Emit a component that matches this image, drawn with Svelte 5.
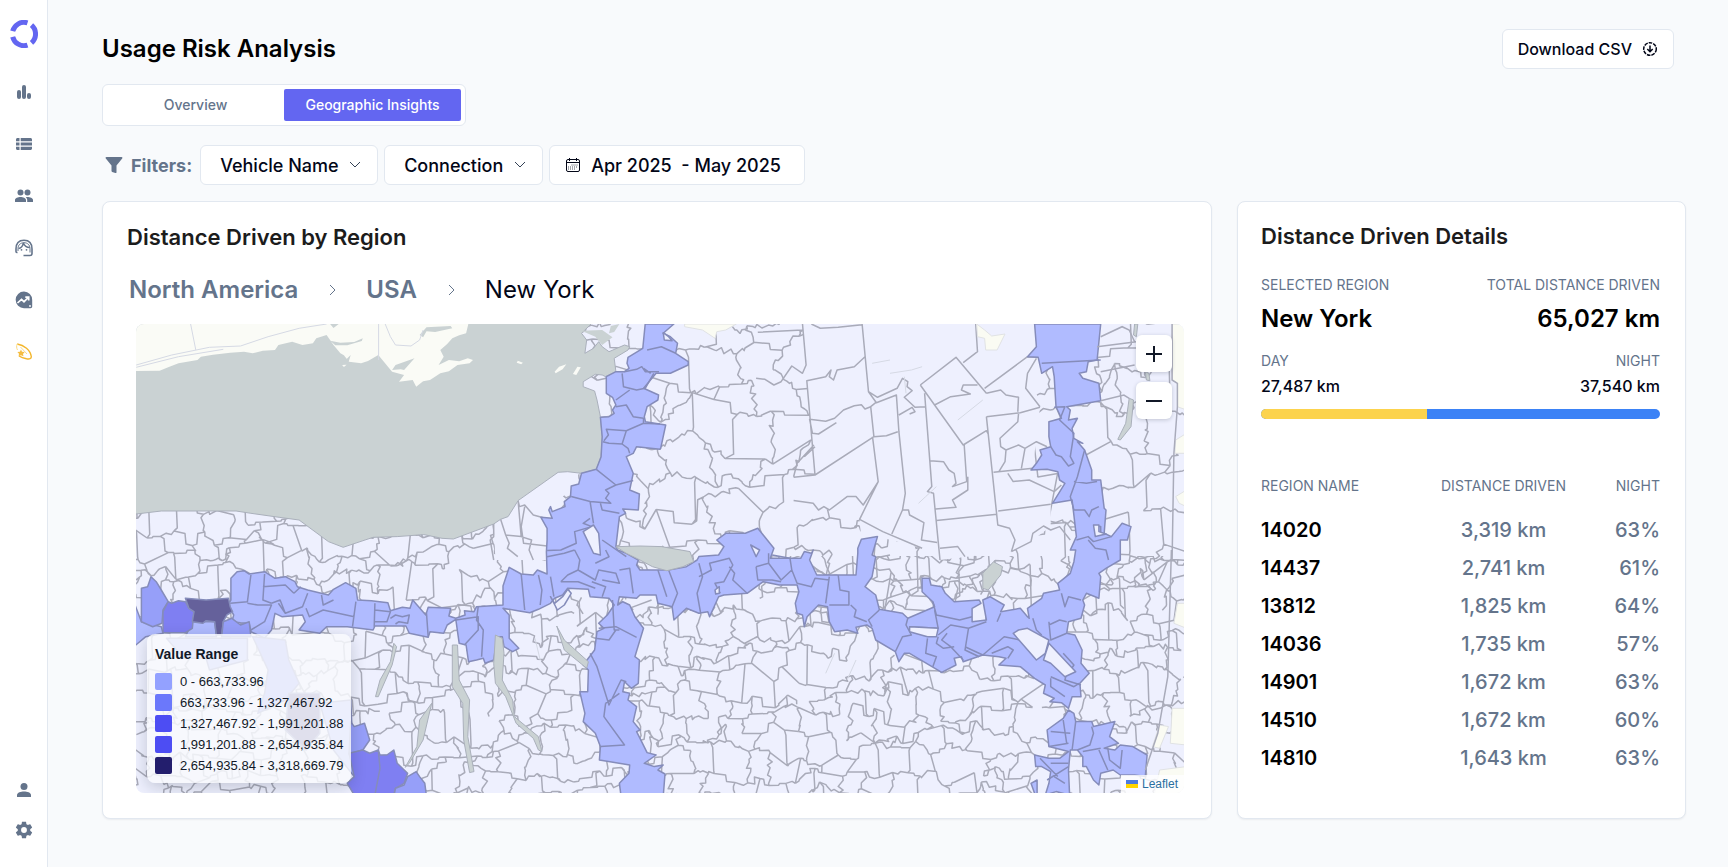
<script lang="ts">
    type Region = { fill: string; d: string }
    type RegionRow = { name: string; distance: string; night: string }

    const rows: RegionRow[] = [
        { name: '14020', distance: '3,319 km', night: '63%' },
        { name: '14437', distance: '2,741 km', night: '61%' },
        { name: '13812', distance: '1,825 km', night: '64%' },
        { name: '14036', distance: '1,735 km', night: '57%' },
        { name: '14901', distance: '1,672 km', night: '63%' },
        { name: '14510', distance: '1,672 km', night: '60%' },
        { name: '14810', distance: '1,643 km', night: '63%' }
    ]

    const legend = [
        { color: '#93a1ff', label: '0 - 663,733.96' },
        { color: '#6b78fb', label: '663,733.96 - 1,327,467.92' },
        { color: '#4d4df3', label: '1,327,467.92 - 1,991,201.88' },
        { color: '#4d4df3', label: '1,991,201.88 - 2,654,935.84' },
        { color: '#231e6d', label: '2,654,935.84 - 3,318,669.79' }
    ]

    let activeTab = $state('geo')
    let dayShare = $state(41.6)

    // The map is digitised on four sheets; a letter in a shape string switches sheet.
    const sheets: Record<string, number[]> = {
        A: [-16, -14, 0.3444, 0.3333],
        B: [504, -14, 0.3571, 0.3333],
        C: [-16, 226, 0.3444, 0.3333],
        D: [504, 226, 0.3571, 0.3333]
    }

    function shape(source: string): string {
        let sheet = sheets.A
        let cmd = 'M'
        let out = ''
        const tokens = source.trim().split(/\s+/)
        for (let i = 0; i < tokens.length; i++) {
            const t = tokens[i]
            if (sheets[t]) {
                sheet = sheets[t]
            } else if (t === 'M') {
                cmd = 'M'
            } else if (t === 'Z') {
                out += 'Z'
            } else {
                const x = sheet[0] + Number(t) * sheet[2]
                const y = sheet[1] + Number(tokens[++i]) * sheet[3]
                out += `${cmd}${x.toFixed(1)} ${y.toFixed(1)}`
                cmd = 'L'
            }
        }
        return out
    }

    function randomizer(seed: number) {
        let s = seed
        return () => {
            s = (s * 16807) % 2147483647
            return s / 2147483647
        }
    }

    // Jagged postal-code boundaries: a loose brick pattern whose edges mix
    // straight survey lines with stepped and crooked ones.
    function mesh(x0: number, y0: number, x1: number, y1: number, w: number, h: number, seed: number) {
        const rnd = randomizer(seed)
        const cols = Math.ceil((x1 - x0) / w) * 2 + 2
        const lines = Math.ceil((y1 - y0) / h) + 1
        const pts: number[][][] = []
        for (let r = 0; r <= lines; r++) {
            pts.push([])
            for (let c = 0; c <= cols; c++) {
                const x = x0 + (c - 1) * (w / 2) + (rnd() - 0.5) * w * 0.46
                const wave = Math.sin(x / 31 + r * 1.7) * h * 0.3
                pts[r].push([x, y0 + r * h + wave + (rnd() - 0.5) * h * 0.85])
            }
        }
        const edge = (p: number[], q: number[]) => {
            let d = `M${p[0].toFixed(1)} ${p[1].toFixed(1)}`
            const dx = q[0] - p[0]
            const dy = q[1] - p[1]
            const kind = rnd()
            if (kind < 0.3) {
                const k = 0.3 + rnd() * 0.4
                d += `L${(p[0] + dx * k).toFixed(1)} ${(p[1] + dy * k * 0.3).toFixed(1)}`
                d += `L${(p[0] + dx * k + 1).toFixed(1)} ${(p[1] + dy * 0.9).toFixed(1)}`
            } else if (kind < 0.82) {
                const n = Math.max(2, Math.round(Math.hypot(dx, dy) / 4))
                for (let i = 1; i < n; i++) {
                    const x = p[0] + (dx * i) / n + (rnd() - 0.5) * 6
                    const y = p[1] + (dy * i) / n + (rnd() - 0.5) * 6
                    d += `L${x.toFixed(1)} ${y.toFixed(1)}`
                }
            }
            return d + `L${q[0].toFixed(1)} ${q[1].toFixed(1)}`
        }
        let out = ''
        for (let r = 0; r < lines; r++) {
            for (let c = 0; c < cols; c++) {
                if (rnd() > 0.05) out += edge(pts[r][c], pts[r][c + 1])
                if ((c + r) % 2 === 0 && rnd() > 0.05) out += edge(pts[r][c], pts[r + 1][c])
            }
        }
        return out
    }

    const fineMesh = mesh(0, 150, 1060, 480, 27, 20, 77)
    const coarseMesh = mesh(460, -10, 1060, 236, 46, 33, 4242)

    const lake = shape(`A 40 40 1370 40 1340 70 1355 90 1350 130 1375 115 1390 95 1400 110 1420 125 1465 105 1480 110
        1475 120 1435 145 1440 185 1410 200 1400 195 1380 193 1345 215 1345 230 1378 243 1385 270 1395 320 1400 380
        1397 440 1383 478 1340 490 1300 485 1272 487 1156 572 1127 620 1105 628 1085 642 968 687 935 685 882 674
        805 680 735 682 648 712 605 695 520 630 462 622 380 610 337 603 120 603 40 613 Z`)

    const canada = shape(`A 40 40 1012 40 1005 70 985 76 965 85 950 102 930 120 940 140 925 165 955 150 985 154 1010 145
        1025 150 1015 160 980 165 955 184 930 190 900 210 880 214 860 230 850 210 810 215 825 195 790 185 750 135
        720 153 700 160 665 155 650 136 640 130 620 105 600 75 570 85 560 100 530 105 500 95 460 105 450 120
        415 122 385 130 360 125 320 128 270 134 235 140 225 150 170 160 140 172 115 182 40 183 Z
        M 1155 152 1170 158 1165 163 1152 158 Z M 1262 185 1275 170 1296 163 1285 178 1265 190 Z
        M 1315 192 1328 170 1338 172 1325 195 Z M 645 165 658 164 650 171 Z`)

    const inlets = shape(`A 610 42 635 42 620 54 Z M 610 92 640 98 680 96 705 85 702 93 660 106 625 106 Z
        M 870 75 890 52 960 48 965 55 915 66 890 64 880 82 Z M 790 180 800 165 855 145 825 180 815 178 Z
        M 655 150 670 135 664 155 Z M 1340 62 1400 60 1430 82 1400 105 1380 80 Z M 1425 48 1450 42 1435 66 1420 70 Z`)

    const smallLakes = shape(`C 1440 -10 B 0 708 60 710 140 725 D 150 35 120 50 75 62 35 50 C 1510 30 1470 10 Z
        M 795 280 803 290 790 345 750 440 742 440 755 390 785 335 Z
        M 965 285 980 285 985 390 1015 450 1010 560 1028 665 1015 668 998 570 995 460 965 410 Z
        M 1090 255 1110 265 1115 310 1110 390 1140 450 1145 500 1215 560 1225 605 1215 600 1200 565 1150 520
        1120 440 1090 400 1085 340 Z
        M 905 460 880 570 840 640 828 652 862 590 870 510 Z M 1268 228 1290 270 1360 335 1355 355 1290 300 Z
        M D 960 70 990 35 1015 50 1010 75 975 120 960 115 Z
        M B 1370 265 1382 270 1375 350 1345 390 1338 388 1360 340 Z M 1385 42 1394 42 1390 80 1382 75 Z
        M 1415 185 1425 190 1428 212 1418 210 Z`)

    const cream = shape(`B 1490 42 1530 42 1530 300 1505 290 1505 220 1490 210 Z
        M 125 42 270 42 240 60 215 65 210 85 175 60 125 50 Z
        M 943 42 965 60 985 78 1022 72 1000 120 968 120 965 85 945 80 Z
        M 1500 390 1530 370 1530 430 1498 430 Z M 1500 560 1530 540 1530 590 1510 580 Z
        M D 1490 475 1530 475 1530 585 1485 580 Z M 1455 525 1480 530 1455 595 1435 590 Z
        M 1505 160 1530 160 1530 235 1495 220 Z M 1455 660 1530 650 1530 735 1440 735 Z`)

    const uplands = shape(`B 455 42 465 165 467 212 490 495 430 502 430 570 560 610 620 560 615 628 620 690 665 680
        790 715 840 750 1040 725 1100 690 1150 650 1150 583 1100 475 1120 292 1110 250 1085 140 1110 110 1105 42 Z`)

    const uplandLines = shape(`B 455 42 465 165 455 190 425 168 395 215 375 225 350 208 325 205
        M 455 60 330 67 M 480 42 505 55 555 52 622 44
        M 622 42 640 245 662 278 718 255 725 365 743 550 735 600 705 672
        M 630 140 600 170 552 180 542 210 530 200 535 180 520 200 467 212 490 495 430 502
        M 490 495 655 380 690 377 722 365 M 655 380 646 290 660 278
        M 646 290 630 297 620 284 600 287 570 300 545 325 520 334 475 328 483 370 500 372 550 338
        M 651 380 667 515 615 628 680 665 790 715 M 667 515 625 585 605 560 580 560 530 600 515 590 500 600 485 580 430 572
        M 640 245 665 262 720 235 735 205 750 215 748 230 762 242 740 262 770 292 800 290
        M 785 225 885 142 970 250 M 785 225 905 405 970 362 975 372 M 797 250 817 530 805 545 822 550 840 750
        M 905 158 945 125 940 42 M 965 235 1085 140 1115 142
        M 970 250 1010 240 1025 255 1060 262 1058 305
        M 825 285 870 260 925 252 900 240 905 225 945 225
        M 908 405 915 515 875 530 885 520 880 490 865 480 850 455 813 452
        M 918 500 918 540 875 570 885 592 828 597 M 970 320 1065 308 1120 292 M 970 320 1002 645 1035 655 1050 690 1040 725
        M 830 632 1000 613 M 1003 603 1150 583 M 990 487 1050 480 1100 475 M 1030 490 1045 515 1090 510 1160 545 1180 525
        M 1060 312 1058 335 1008 385 1010 410 1025 420 1022 455 1005 485 M 1025 420 1060 405 1078 415 1068 475
        M 1078 415 1110 395 1140 410 M 725 315 762 292 770 305 755 312
        M 735 600 752 600 755 615 795 638 788 690 832 698 M 840 715 890 710 910 740
        M 1040 725 1095 695 1100 670 1130 648 1150 660 1175 650 1205 690
        M 660 680 655 745 700 735 M 1085 190 1080 235 1120 290 M 1085 190 1110 145
        M 487 405 440 460 430 500 M 460 440 490 410`)

    const shoreLand = shape('A 1156 560 1100 620 1085 640 1090 750 1260 750 1260 600 1340 480 1270 480 Z')

    const shoreLines = shape(`A 1156 572 1160 590 1175 585 1200 615 1235 625 M 1156 572 1165 680 1120 675 1105 628
        M 1085 642 1085 680 1075 690 1085 750 M 1165 650 1172 700 1240 708 M 1120 675 1130 700 1125 715 1155 740
        M 1165 680 1195 690 1188 720 1200 750 M 1175 590 1165 650`)

    const corridor = shape(`A 1525 42 1518 115 1475 142 1472 160 1478 175 1465 185 1440 185 1412 200 1412 250 1430 262 1440 285
        1430 300 1435 310 1420 320 1395 322 1400 380 1397 440 1383 478 1340 490 1332 522 1310 528 1308 560 1290 575
        1292 590 1255 605 1250 590 1245 600 1255 625 1222 622 1240 655 1240 690
        C 1238 5 1240 72 1212 60 1200 75 1165 72 1130 52 1112 108 1112 165 1035 170 1028 185 1000 182 1002 195
        975 205 955 198 960 175 895 172 888 195 850 150 842 175 820 172 785 182 778 158 730 152 690 150 685 115
        655 98 620 118 605 135 545 120 515 110 508 95 480 80 450 85 420 65 375 72 360 62 340 65 322 85 322 150 313 165
        330 195 325 215 350 218 375 220 380 245 420 265 440 240 450 190 470 200 530 195 538 215 520 240 580 250
        600 230 660 230 735 240 740 228 830 228 840 250 895 262 900 245 940 250 950 225 975 208 985 280 1005 285
        1012 335 1035 330 1055 325 1060 340 1085 330 1095 260 1110 260 1115 290 1140 305 1158 295 1130 265
        1130 195 1112 175 1155 182 1190 188 1215 178 1250 160 1262 145 1285 135 1300 115 1360 118 1365 140 1420 145
        1435 165 1415 195 1390 220 1405 235 1385 245 1378 300 1345 345 1360 360 1358 425 1335 425 1350 490
        1345 515 1380 550 1395 590 1392 630 1480 645 1478 670 1450 700 1455 740
        D 65 740 70 672 50 660 65 645 40 650 12 640 45 615 20 608 0 565
        C 1500 545 1510 540 1490 515 1500 470 1475 450 1480 430 1460 425 1465 395 1485 415 1505 400 1508 330
        1495 320 1520 235 1495 200 1480 165 1460 155 1445 165 1450 140 1500 145
        D 0 135 45 135 50 160 90 170 95 210 130 175 165 190 190 185 195 200 220 140 235 135 300 130 345 95 390 105
        440 105 445 125 435 160 440 190 455 195 460 230 468 200 500 165 525 170 530 215 545 245 580 240 610 250 605 232 635 225
        650 235 660 270 715 305 725 335 740 310 755 310 845 367 885 345 880 325 900 320 905 335 960 315 1005 320
        1025 325 1005 345 1065 350 1105 385 1135 405 1130 430 1160 445 1148 455 1180 458 1200 475 1210 440 1235 440
        1232 400 1258 370 1235 340 1238 300 1218 255 1195 250 1200 215 1235 205 1245 165 1240 150 1250 130 1285 145
        1290 80 1285 70 1305 55 1345 30
        B 1345 690 1365 690 1375 650 1350 640 1320 680 1300 670 1305 600 1300 595 1290 510 1265 510 1265 480
        1245 420 1225 395 1240 400 1215 385 1210 355 1225 325 1200 330 1205 300 1195 290 1290 272 1285 220
        1240 205 1230 190 1250 185 1255 155 1280 150 1290 42 1105 42 1110 110 1085 140 1115 142 1125 190 1155 170
        1160 200 1165 290 1180 325 1145 335 1145 380 1150 410 1120 420 1125 435 1110 460 1095 480 1140 478
        1170 485 1175 510 1190 520 1155 580 1210 570 1222 680 1205 720
        D 1220 0 1215 35 1205 70 1170 100 1175 120 1130 130 1125 145 1085 175 1090 205 1085 200 1065 175 1010 185
        1020 165 980 140 960 150 970 210 930 215 930 175 955 160 950 150 880 155 855 130 845 110 815 105 810 85 790 85
        790 125 820 155 825 170 750 205 735 190 670 178 660 135 630 110 650 80 660 20
        B 650 735 665 680 620 688 610 715 D 610 10 605 75 530 75 495 75 475 30 485 0
        B 480 730 460 725 450 745 365 745 375 715 330 655 295 670 240 670 215 690 235 710 220 735 165 740
        D 160 30 130 50 80 60 50 60 0 60 C 1500 45 1505 30 1470 10 1445 0
        A 1440 710 1450 620 1468 610 1460 597 1505 600 1508 552 1480 540 1490 490 1470 440 1490 430 1500 410 1568 418
        B 58 415 72 345 15 335 12 320 20 290 50 270 52 255 10 235 45 190 85 190 135 165 135 155 100 130 105 100
        85 80 65 70 95 42 Z`)

    const corridorLines = shape(`A 1465 185 1500 178 1515 170 1525 185 1565 185 M 1458 190 1462 230 1500 240 1525 235 1550 190
        M 1440 270 1480 240 M 1440 290 1470 285 1490 320 1520 325 1520 340 1470 362 1412 358 1418 375 1405 392
        M 1520 340 1568 342 M 1470 362 1458 402 1420 400 1402 395 M 1458 402 1475 415 1480 430
        M 1383 478 1440 525 1490 512 M 1440 525 1410 540 1420 550 1410 565 1425 580 1365 575 1310 560
        M 1365 575 1375 640 M 1395 580 1400 600 1450 610 M 1365 625 1345 640 1370 650 1320 665 1325 700 1280 720 1240 722
        M 1400 690 1470 740
        M C 1320 0 1335 30 1330 60 1380 90 1390 60 1440 70 1450 100 1400 90 M 1410 0 1420 20 1380 40 M 1165 72 1175 180
        M 1215 75 1225 120 1220 165 M 1250 80 1260 140 M 1280 95 1330 95 1380 115 M 1450 60 1480 55 1490 130 M 1400 140 1410 110 1370 95
        M 1430 150 1435 240 1450 240 M 1390 235 1440 230 1500 262 M 1380 265 1420 270 1440 240 M 1365 310 1385 350 1420 465 1455 390 1470 395
        M 1410 460 1405 500 1465 585 1395 590 M 1410 460 1450 430 M 380 75 370 155 320 160 M 420 72 415 150 440 160 M 415 110 480 105 505 130
        M 545 130 530 170 480 190 460 160 M 540 175 550 200 590 180 680 200 M 685 155 675 230 M 740 160 738 230 M 740 180 785 185 775 215 740 215
        M 785 205 800 195 820 200 840 195 835 220 810 215 800 222 M 890 190 895 260 M 975 210 1040 200 1040 240 1000 285
        M 1040 170 1035 210 1055 240 1050 320 M 370 160 400 165 440 165 420 215 380 240 M 585 135 590 165 620 150
        M 440 160 465 150 480 190 M 505 130 525 110 M 1330 60 1300 75 1280 95 M 1240 20 1290 10 1320 0
        M D 50 60 75 140 M 80 60 105 130 90 170 M 165 40 175 80 160 130 170 190 M 165 80 200 60 195 40 250 25 260 45 235 95 210 100 225 130
        M 250 50 265 70 260 90 300 130 M 325 50 360 40 360 10 M 325 50 330 90 370 90 395 95 M 360 40 395 90 425 60 420 25 370 15
        M 425 60 440 100 480 110 490 85 530 90 M 530 80 520 160 M 555 75 560 120 585 125 585 165 530 165 M 590 165 605 180 600 200 635 215
        M 670 180 640 210 650 230 M 750 205 745 225 760 255 735 260 715 305 M 755 230 835 235 825 180 M 820 155 830 195 895 210 930 200
        M 835 260 830 280 850 295 880 290 M 805 265 800 310 830 320 820 350 M 835 255 870 225 920 235 910 300 950 320
        M 860 250 845 270 870 290 905 330 M 920 235 970 215 M 910 290 960 315 1020 260 1065 270 M 1000 215 1010 190
        M 985 310 1030 290 1045 300 1030 325 M 1150 385 1150 410 1190 440 M 1150 380 1215 410 1230 400 M 1195 215 1175 210 1145 225
        M 1145 215 1150 270 1195 250 M 1100 205 1110 240 1125 255 M 1180 130 1190 170 1200 140 1235 150
        M 1185 310 1215 345 1200 370 M 1195 370 1190 390 1235 405
        M B 1125 160 1290 150 M 1160 292 1190 290 1175 330 1215 370 1205 440 1215 460 1200 468 1180 440 1165 435 1150 410
        M 1245 420 1225 500 1205 560 1215 600 1245 600 1258 620 1265 600 1285 590 M 1215 515 1250 520 1280 515
        M 1222 690 1255 680 1270 695 1320 680 M 1270 650 1290 650 1290 670 1305 672 M 1255 690 1275 715 1305 720 1312 750
        M 20 120 60 110 100 130 M 10 175 30 190`)

    const southEast = shape(`D 1200 480 1215 490 1220 515 1265 515 1270 530 1330 515 1315 560 1340 580 1300 595 1330 600
        1345 585 1380 590 1420 615 1415 680 1385 675 1345 675 1325 660 1290 670 1285 705 1270 690 1250 650 1240 650
        1240 620 1225 600 1205 600 1200 660 1203 735 1165 725 1135 735 1145 700 1150 665 1125 650 1108 650 1105 615
        1145 625 1175 625 1200 605 1145 590 1140 540 1185 505 Z M 1095 700 1112 690 1112 735 1105 730 Z`)

    const southEastLines = shape(`D 1220 515 1210 600 M 1265 530 1270 550 1260 585 1225 600 M 1285 600 1310 660
        M 1310 595 1315 630 1345 655 1350 600 M 1145 590 1200 580 M 1150 640 1200 640 M 1140 690 1200 650
        M 1160 680 1190 700 M 1120 625 1170 680 M 1185 510 1195 580 M 1240 605 1290 595 M 1150 545 1205 550`)

    const holes = shape(`A 1375 645 1345 665 1375 730 1395 735 1390 670 Z M D 755 230 835 235 830 260 805 260 755 245 Z
        M B 310 705 335 720 325 740 Z M B 65 68 80 80 90 92 68 90 Z M D 1045 250 1060 240 1085 235 1145 270 1135 310 1110 330 Z
        M D 1130 330 1145 280 1220 365 1190 380 1150 340 Z M B 1270 645 1285 645 1285 665 1305 672 1275 680 Z
        M D 210 120 222 110 222 130 212 132 Z M C 1250 140 1262 160 1285 140 1300 118 1310 130 1290 165 1270 180 Z`)

    const regions: Region[] = [
        { fill: '#b0bbff', d: shape('C 40 155 62 215 120 230 125 250 75 260 40 290 Z M 210 215 275 215 280 260 190 260 Z') },
        { fill: '#b0bbff', d: shape('C 135 265 370 265 370 330 260 360 250 325 185 325 Z M 580 460 670 450 680 680 620 600 Z') },
        { fill: '#969ff9', d: shape('C 62 115 80 110 90 80 105 95 120 120 140 155 125 180 122 220 95 230 62 215 Z') },
        { fill: '#7f7ff2', d: shape('C 125 185 140 155 150 160 170 152 190 155 200 175 215 185 210 235 190 248 125 248 Z') },
        { fill: '#65619b', d: shape('C 190 145 250 150 315 145 320 170 327 185 310 195 300 215 295 255 280 255 275 215 250 212 240 220 210 215 215 185 200 175 Z') },
        { fill: '#969ff9', d: shape('C 300 215 325 205 350 225 375 215 380 260 295 260 Z') },
        { fill: '#969ff9', d: shape('C 385 260 480 270 490 330 520 400 480 450 400 490 420 430 430 360 Z') },
        { fill: '#65619b', d: shape('C 490 430 580 430 580 550 540 600 480 540 Z') },
        { fill: '#969ff9', d: shape('C 670 515 680 530 710 520 725 570 705 600 665 612 Z') },
        {
            fill: '#7f7ff2',
            d: shape('C 665 610 705 600 725 610 750 600 755 615 775 615 795 600 805 640 835 670 825 700 800 715 795 735 680 735 660 700 680 680 Z M 750 600 755 655 740 735')
        },
        { fill: '#969ff9', d: shape('C 835 680 860 665 870 680 885 700 890 740 795 740 800 715 825 705 Z') }
    ]

    const border = shape(`B 1490 42 1490 210 1505 220 1505 290 1495 430 1490 750 M D 1488 0 1478 380 1450 550 1415 660
        M B 1280 110 1390 95 M 1290 185 1385 165 M 1290 80 1350 50 1370 60 1385 95 M 1290 272 1355 255 1370 265`)

    const roads = shape(`A 47 165 150 135 260 112 350 108 430 80 520 55 600 42 M 47 172 170 140 300 118 M 205 42 220 120
        M 770 42 785 80 800 105 845 108 870 90 880 60 M 751 42 751 150
        M B 650 160 700 150 M 700 190 760 180 790 170 M 740 200 745 250 M 780 580 800 560 830 530 M 890 330 960 270
        M D 580 390 605 330 M 520 370 545 310 M C 1205 265 1220 330`)
</script>

<div class="layout">
    <nav class="sidebar" aria-label="Main">
        <a class="logo" href="#home" aria-label="Home">
            <svg viewBox="0 0 28 28" width="28" height="28" fill="none" stroke="#6366f1" stroke-width="5">
                <path d="M2.7 11.2A11.6 11.6 0 0 1 17.5 2.9" />
                <path d="M2.7 16.8A11.6 11.6 0 0 0 17.5 25.1" />
                <path d="M21.5 5.2A11.6 11.6 0 0 1 21.5 22.8" />
            </svg>
        </a>
        <div class="nav-links">
            <a href="#stats" aria-label="Statistics">
                <svg viewBox="0 0 20 20">
                    <rect x="3" y="8" width="4" height="9" rx="2" />
                    <rect x="8" y="3" width="4" height="14" rx="2" />
                    <rect x="13" y="11" width="4" height="6" rx="2" />
                </svg>
            </a>
            <a href="#list" aria-label="List">
                <svg viewBox="0 0 20 20">
                    <path d="M2 5.5C2 4.7 2.7 4 3.5 4H5.5V7.3H2ZM6.7 4H16.5C17.3 4 18 4.7 18 5.5V7.3H6.7ZM2 8.5H5.5V11.5H2ZM6.7 8.5H18V11.5H6.7ZM2 12.7H5.5V16H3.5C2.7 16 2 15.3 2 14.5ZM6.7 12.7H18V14.5C18 15.3 17.3 16 16.5 16H6.7Z" />
                </svg>
            </a>
            <a href="#people" aria-label="People">
                <svg viewBox="0 0 20 20">
                    <circle cx="6.5" cy="6.5" r="3" />
                    <circle cx="13.5" cy="6.5" r="3" />
                    <path d="M1 16V14C1 12 4 11 6.5 11S12 12 12 14V16ZM13.2 16V14C13.2 12.8 12.6 11.9 11.7 11.2C15 10.7 19 12 19 14V16Z" />
                </svg>
            </a>
            <a href="#support" aria-label="Support">
                <svg viewBox="0 0 20 20">
                    <path
                        d="M3.5 14.5H2.8C2.2 14.5 2 14 2 13.5V11C2 5.500 5 2.200 10 2.200S18 5.500 18 11V15.500C18 16.700 17.200 17.500 16 17.500H9.500M4.500 10.500C7.500 9.800 9 7.800 9.300 5C10.500 8 12.500 9.500 15.800 9.500"
                        fill="none"
                        stroke="currentColor"
                        stroke-width="1.6"
                    />
                    <path d="M4 13V10.500C4 7 6.500 4.700 10 4.700S16 7 16 10.500V14.500" fill="none" stroke="currentColor" />
                    <circle cx="7.5" cy="11.800" r="0.900" />
                    <circle cx="12.5" cy="11.800" r="0.900" />
                </svg>
            </a>
            <a href="#trends" aria-label="Trends">
                <svg viewBox="0 0 20 20">
                    <path d="M10 1.500A8.300 8.300 0 0 0 10 18.200H16.500C17.500 18.200 18.200 17.500 18.200 16.500V10A8.400 8.400 0 0 0 10 1.500Z" />
                    <path d="M3.500 13L7.500 9.300L10 11.700L14.300 7.500M11.300 7.200H14.700V10.600" fill="none" stroke="#fff" stroke-width="1.700" />
                    <circle cx="16" cy="16" r="0.900" fill="#fff" />
                </svg>
            </a>
            <a href="#highlights" aria-label="Highlights">
                <svg class="comet" viewBox="0 0 20 20">
                    <path d="M3.200 2C10 3 16.500 8 17.300 14.500C17.500 16.800 15.500 17.300 12.500 16.800C9.500 16.200 7 15.300 5 14" stroke="#f3b62c" stroke-width="1.400" />
                    <path d="M3.200 2C2.300 4 2.500 6 3.500 8M6.500 5L13 12" stroke="#fbdc86" />
                    <path d="M7 7.500L8 9.800L10.700 10L9 12L9.500 14.300L7 13.300L4.600 14.300L5 11.800L3.400 10L5.900 9.700Z" fill="#f5bd42" />
                </svg>
            </a>
        </div>
        <div class="nav-footer">
            <a href="#account" aria-label="Account">
                <svg viewBox="0 0 20 20">
                    <circle cx="10" cy="6.500" r="3.500" />
                    <path d="M3 17V15C3 12.600 7 11.500 10 11.500S17 12.600 17 15V17Z" />
                </svg>
            </a>
            <a href="#settings" aria-label="Settings">
                <svg viewBox="0 0 24 24">
                    <path d="M19.430 12.980c.04-.32.07-.64.07-.98s-.03-.66-.07-.98l2.110-1.650c.19-.15.24-.42.12-.64l-2-3.460c-.12-.22-.39-.3-.61-.22l-2.490 1c-.52-.4-1.080-.73-1.690-.98l-.38-2.650C14.460 2.180 14.250 2 14 2h-4c-.25 0-.46.18-.49.42l-.38 2.650c-.61.25-1.170.59-1.690.98l-2.490-1c-.23-.09-.49 0-.61.22l-2 3.460c-.13.22-.07.49.12.64l2.110 1.650c-.04.32-.07.65-.07.98s.03.66.07.98l-2.110 1.650c-.19.15-.24.42-.12.64l2 3.460c.12.22.39.3.61.22l2.490-1c.52.4 1.080.73 1.690.98l.38 2.650c.03.24.24.42.49.42h4c.25 0 .46-.18.49-.42l.38-2.650c.61-.25 1.170-.59 1.690-.98l2.490 1c.23.09.49 0 .61-.22l2-3.460c.12-.22.07-.49-.12-.64zM12 15.500A3.500 3.500 0 1 1 12 8.500a3.500 3.500 0 0 1 0 7z" />
                </svg>
            </a>
        </div>
    </nav>

    <main>
        <header>
            <h1>Usage Risk Analysis</h1>
            <button class="control download">
                Download CSV
                <svg viewBox="0 0 16 16" width="16" height="16" fill="none" stroke="currentColor" stroke-width="1.500">
                    <circle cx="8" cy="8" r="6.300" stroke-dasharray="3.600 1" />
                    <path d="M8 4.500V10.500M5.300 8L8 10.700L10.700 8" />
                </svg>
            </button>
        </header>

        <div class="tabs">
            <button class:active={activeTab === 'overview'} onclick={() => (activeTab = 'overview')}>Overview</button>
            <button class:active={activeTab === 'geo'} onclick={() => (activeTab = 'geo')}>Geographic Insights</button>
        </div>

        <div class="filters">
            <span class="filters-label">
                <svg viewBox="0 0 18 18" width="18" height="18" fill="currentColor">
                    <path d="M1.500 1H16.500C17.500 1 17.700 2 17.200 2.600L11.500 9.500V16.200C11.500 16.900 11 17.200 10.400 17L7.200 16C6.800 15.800 6.500 15.500 6.500 15V9.500L.8 2.600C.3 2 .5 1 1.500 1Z" />
                </svg>
                Filters:
            </span>
            <div class="select">
                <select class="control" aria-label="Vehicle Name"><option>Vehicle Name</option></select>
                <svg viewBox="0 0 12 12"><path d="M1 3L6 8L11 3" /></svg>
            </div>
            <div class="select">
                <select class="control" aria-label="Connection"><option>Connection</option></select>
                <svg viewBox="0 0 12 12"><path d="M1 3L6 8L11 3" /></svg>
            </div>
            <button class="control dates">
                <svg viewBox="0 0 16 16" width="16" height="16" fill="none" stroke="currentColor" stroke-width="1">
                    <rect x="1.500" y="2.500" width="13" height="12" rx="1.500" />
                    <path d="M1.500 5.500H14.500M4.500 1V4M11.500 1V4" />
                    <path d="M6.500 8H13M3 10H13M3 12H10" stroke-dasharray="1 1" stroke-opacity="0.7" />
                </svg>
                Apr 2025&nbsp; - May 2025
            </button>
        </div>

        <div class="cards">
            <section class="card map-card">
                <h2>Distance Driven by Region</h2>
                <nav class="breadcrumb" aria-label="Region">
                    <a href="#north-america">North America</a>
                    <svg viewBox="0 0 12 12"><path d="M4 1L9 6L4 11" /></svg>
                    <a href="#usa">USA</a>
                    <svg viewBox="0 0 12 12"><path d="M4 1L9 6L4 11" /></svg>
                    <span>New York</span>
                </nav>

                <div class="map">
                    <svg class="map-canvas" viewBox="0 0 1048 469" preserveAspectRatio="xMidYMid slice">
                        <rect width="1048" height="469" fill="#eef0fe" />
                        <g class="boundary">
                            <path d={fineMesh} />
                            <path d="M460 0H1048V232H460Z" class="land" />
                            <path d={coarseMesh} />
                            <path d={uplands} class="land" />
                            <path d={uplandLines} />
                            <path d={shoreLand} class="land" />
                            <path d={shoreLines} />
                        </g>
                        <path d={lake} fill="#cad2d3" stroke="#aab0bb" />
                        <path d={canada} fill="#fafbf6" />
                        <path d={inlets} fill="#cad2d3" />
                        <path d={cream} fill="#fafbf3" stroke="#e0e2e4" />
                        <g class="boundary on-fill">
                            <path d={corridor} fill="#b0bbff" />
                            <path d={corridorLines} />
                            <path d={southEast} fill="#b0bbff" />
                            <path d={southEastLines} />
                            <path d={holes} fill="#eef0fe" />
                            {#each regions as region}
                                <path d={region.d} fill={region.fill} />
                            {/each}
                        </g>
                        <path d={smallLakes} fill="#cad2d3" stroke="#aab0bb" />
                        <path d={border} class="border" />
                        <path d={roads} class="roads" />
                    </svg>

                    <div class="zoom">
                        <button aria-label="Zoom in"><svg viewBox="0 0 16 16"><path d="M8 0V16M0 8H16" /></svg></button>
                        <button aria-label="Zoom out"><svg viewBox="0 0 16 16"><path d="M0 8H16" /></svg></button>
                    </div>

                    <div class="legend">
                        <h3>Value Range</h3>
                        <ul>
                            {#each legend as item}
                                <li><i style="background: {item.color}"></i>{item.label}</li>
                            {/each}
                        </ul>
                    </div>

                    <a class="attribution" href="#leaflet">
                        <svg viewBox="0 0 12 8" width="12" height="8">
                            <path fill="#4c7be1" d="M0 0H12V4H0Z" />
                            <path fill="#ffd500" d="M0 4H12V8H0Z" />
                        </svg>
                        Leaflet
                    </a>
                </div>
            </section>

            <section class="card details">
                <h2>Distance Driven Details</h2>
                <dl class="pair region">
                    <div><dt>SELECTED REGION</dt><dd>New York</dd></div>
                    <div><dt>TOTAL DISTANCE DRIVEN</dt><dd>65,027 km</dd></div>
                </dl>
                <dl class="pair split">
                    <div><dt>DAY</dt><dd>27,487 km</dd></div>
                    <div><dt>NIGHT</dt><dd>37,540 km</dd></div>
                </dl>
                <div class="bar"><div style="width: {dayShare}%"></div></div>

                <table>
                    <thead>
                        <tr><th>REGION NAME</th><th>DISTANCE DRIVEN</th><th>NIGHT</th></tr>
                    </thead>
                    <tbody>
                        {#each rows as row (row.name)}
                            <tr>
                                <td>{row.name}</td>
                                <td>{row.distance}</td>
                                <td>{row.night}</td>
                            </tr>
                        {/each}
                    </tbody>
                </table>
            </section>
        </div>
    </main>
</div>

<style>
    :global(body) {
        background: #f8fafc;
        color: #020617;
        font-family: Inter, 'Liberation Sans', sans-serif;
    }

    .layout {
        display: flex;
        min-height: 100vh;
    }

    button,
    select {
        font-family: inherit;
        cursor: pointer;
    }

    h1,
    h2,
    h3,
    dl,
    dd,
    ul {
        margin: 0;
        padding: 0;
    }

    a {
        color: inherit;
        text-decoration: none;
    }

    .sidebar {
        width: 47px;
        flex-shrink: 0;
        display: flex;
        flex-direction: column;
        align-items: center;
        background: #fff;
        border-right: 1px solid #e2e8f0;
        padding: 20px 0 27px;
        color: #64748b;
    }

    .sidebar a,
    .sidebar svg {
        display: block;
    }

    .nav-links {
        display: flex;
        flex-direction: column;
        gap: 32px;
        margin-top: 34px;
    }

    .nav-links svg,
    .nav-footer svg {
        width: 20px;
        height: 20px;
        fill: currentColor;
    }

    .nav-links .comet {
        fill: none;
    }

    .nav-footer {
        display: flex;
        flex-direction: column;
        gap: 20px;
        margin-top: auto;
    }

    main {
        flex: 1;
        min-width: 0;
        padding: 29px 42px 24px 54px;
    }

    header {
        display: flex;
        justify-content: space-between;
        align-items: center;
        margin-right: 12px;
    }

    h1 {
        font-size: 24px;
        line-height: 32px;
        font-weight: 600;
        color: #000;
    }

    .control {
        height: 40px;
        box-sizing: border-box;
        background: #fff;
        border: 1px solid #e2e8f0;
        border-radius: 6px;
        color: #020617;
        font-size: 18px;
        font-weight: 500;
    }

    .download {
        display: flex;
        align-items: center;
        gap: 10px;
        padding: 0 15px;
        font-size: 16px;
    }

    .tabs {
        display: grid;
        grid-template-columns: 1fr 1fr;
        width: 364px;
        box-sizing: border-box;
        margin-top: 15px;
        padding: 4px;
        background: #fff;
        border: 1px solid #e2e8f0;
        border-radius: 6px;
    }

    .tabs button {
        height: 32px;
        padding: 0 0 2px;
        border: none;
        border-radius: 2px;
        background: transparent;
        color: #64748b;
        font-size: 14px;
        font-weight: 500;
    }

    .tabs button.active {
        background: #6366f1;
        color: #fff;
    }

    .filters {
        display: flex;
        align-items: center;
        gap: 6px;
        margin-top: 19px;
    }

    .filters-label {
        display: flex;
        align-items: center;
        gap: 8px;
        padding: 0 2px 0 3px;
        color: #64748b;
        font-size: 18px;
        font-weight: 700;
    }

    .select {
        position: relative;
    }

    .select select {
        appearance: none;
        padding: 0 38px 0 19px;
    }

    .select svg {
        position: absolute;
        right: 17px;
        top: 14px;
        width: 12px;
        height: 12px;
        fill: none;
        stroke: #334155;
        pointer-events: none;
    }

    .dates {
        display: flex;
        align-items: center;
        gap: 10px;
        padding: 0 23px 0 15px;
    }

    .cards {
        display: grid;
        grid-template-columns: minmax(0, 1fr) 449px;
        gap: 25px;
        margin-top: 16px;
    }

    .card {
        background: #fff;
        border: 1px solid #e2e8f0;
        border-radius: 8px;
        box-shadow: 0 1px 2px rgba(15, 23, 42, 0.06);
    }

    h2 {
        font-size: 22px;
        line-height: 28px;
        font-weight: 600;
        color: #1c1c1c;
    }

    .map-card {
        padding: 21px 27px 25px 24px;
    }

    .breadcrumb {
        display: flex;
        align-items: center;
        gap: 28px;
        margin: 23px 0 18px 2px;
        font-size: 24px;
        line-height: 32px;
    }

    .breadcrumb a {
        color: #64748b;
        font-weight: 600;
    }

    .breadcrumb svg {
        width: 12px;
        height: 12px;
        fill: none;
        stroke: #64748b;
    }

    .map {
        position: relative;
        margin-left: 9px;
        aspect-ratio: 1048 / 469;
        border-radius: 8px;
        overflow: hidden;
    }

    .map-canvas {
        display: block;
        width: 100%;
        height: 100%;
        fill: none;
    }

    .boundary {
        stroke: #a9abb9;
        stroke-width: 1.5;
        stroke-linejoin: round;
    }

    .boundary.on-fill {
        stroke: #858cba;
    }

    .boundary .land {
        fill: #eef0fe;
        stroke: none;
    }

    .border {
        stroke: #a9abba;
        stroke-width: 1.5;
    }

    .roads {
        stroke: #d5d9e4;
        stroke-width: 1;
    }

    .zoom {
        position: absolute;
        top: 11px;
        right: 12px;
        display: flex;
        flex-direction: column;
        gap: 10px;
    }

    .zoom button {
        display: grid;
        place-items: center;
        width: 36px;
        height: 37px;
        padding: 0;
        background: #fff;
        border: none;
        border-radius: 6px;
        box-shadow: 0 1px 4px rgba(15, 23, 42, 0.2);
    }

    .zoom svg {
        width: 16px;
        height: 16px;
        stroke: #111827;
        stroke-width: 2;
    }

    .legend {
        position: absolute;
        left: 11px;
        bottom: 10px;
        padding: 11px 8px 9px 8px;
        background: rgba(248, 249, 253, 0.84);
        border-radius: 8px;
        box-shadow: 0 4px 16px rgba(15, 23, 42, 0.2);
        font-family: 'Liberation Sans', Arial, sans-serif;
        font-size: 13px;
        color: #111827;
    }

    .legend h3 {
        font-size: 14px;
        line-height: 18px;
        font-weight: 600;
        margin-bottom: 10px;
    }

    .legend ul {
        display: flex;
        flex-direction: column;
        gap: 4px;
        list-style: none;
    }

    .legend li {
        display: flex;
        align-items: center;
        gap: 8px;
        line-height: 17px;
    }

    .legend i {
        width: 17px;
        height: 17px;
        border-radius: 2px;
    }

    .attribution {
        position: absolute;
        right: 0;
        bottom: 0;
        display: flex;
        align-items: center;
        gap: 4px;
        padding: 0 6px 0 5px;
        background: rgba(255, 255, 255, 0.8);
        color: #2a6f9f;
        font-family: 'Liberation Sans', Arial, sans-serif;
        font-size: 12px;
        line-height: 18px;
    }

    .details {
        padding: 20px 25px 24px 23px;
    }

    .pair {
        display: flex;
        justify-content: space-between;
    }

    .pair div:last-child {
        text-align: right;
    }

    dt {
        color: #64748b;
        font-size: 14px;
        line-height: 20px;
    }

    .region {
        margin-top: 25px;
    }

    .region dd {
        margin-top: 8px;
        font-size: 24px;
        line-height: 32px;
        font-weight: 600;
        color: #000;
    }

    .split {
        margin-top: 16px;
    }

    .split dd {
        margin-top: 4px;
        font-size: 16px;
        line-height: 22px;
        font-weight: 500;
    }

    .bar {
        height: 10px;
        margin-top: 12px;
        border-radius: 5px;
        overflow: hidden;
        background: #3b82f6;
    }

    .bar div {
        height: 100%;
        background: #fcd34d;
    }

    table {
        width: 100%;
        margin-top: 44px;
        border-collapse: collapse;
        color: #64748b;
    }

    th,
    td {
        padding: 0;
        text-align: left;
    }

    th:nth-child(2),
    td:nth-child(2) {
        width: 124px;
        text-align: center;
        white-space: nowrap;
    }

    th:nth-child(3),
    td:nth-child(3) {
        width: 94px;
        text-align: right;
    }

    th {
        height: 44px;
        padding-bottom: 4px;
        font-size: 14px;
        font-weight: 400;
    }

    td {
        height: 38px;
        font-size: 20px;
        font-weight: 500;
    }

    td:first-child {
        color: #000;
        font-weight: 600;
    }
</style>
